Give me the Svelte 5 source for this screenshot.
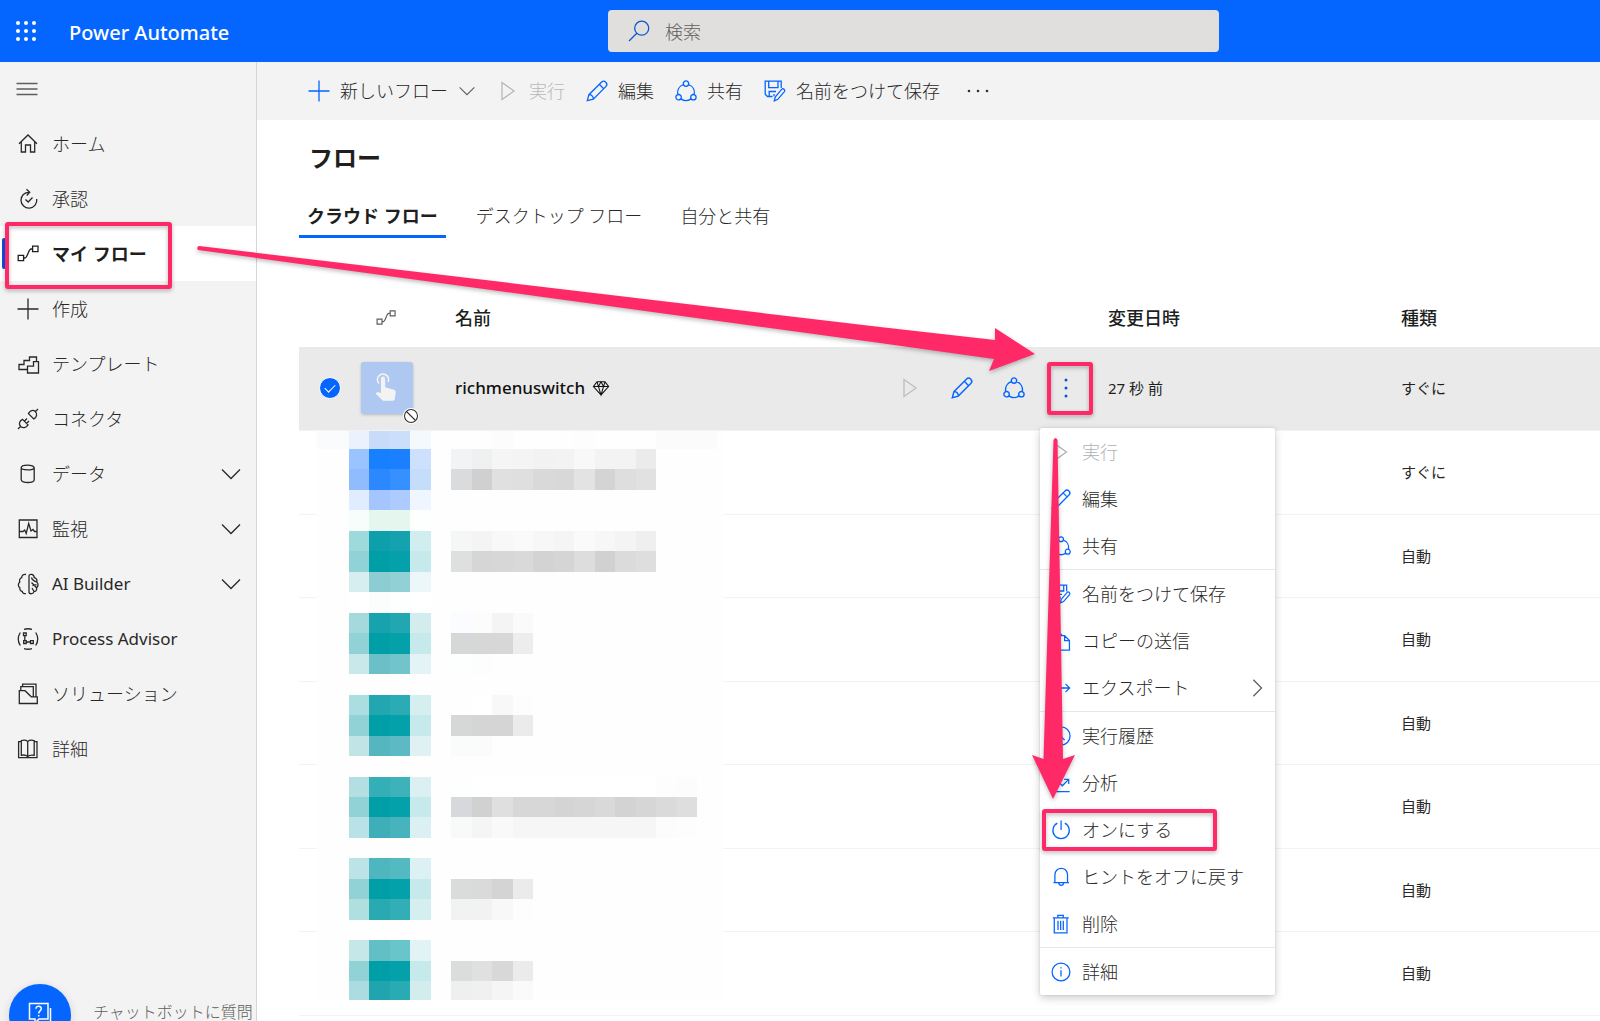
<script>
  const ring = (x, y, r) => `M${x - r} ${y}a${r} ${r} 0 1 0 ${2 * r} 0a${r} ${r} 0 1 0 ${-2 * r} 0`;

  const icons = {
    home: 'M2 10.7L11 2L20 10.7M4.3 8.6V19H8.5V12H13.5V19H17.7V8.6',
    approve: 'M12.2 4.3A7.9 7.9 0 1 0 19.7 11M9.5 1.2L12.7 4.3L9.7 7.5M8.5 11.5L11.2 14L15.5 9.5',
    flow: 'M1.2 12.3H6.6V17.7H1.2ZM15.6 3.2H21V8.6H15.6ZM6.6 15H8C10.5 15 11.5 6 14 6H15.6',
    plus: 'M11 .5V21.5M.5 11H21.5',
    template: 'M10 16.5H2V11.5H7V7.5H12.5V4H19.5V8.5M10.5 20H21.5V8.7H16.5V13.2H10.5Z',
    plug: 'M1 21L3.5 18.5M5.6 11.4L11 16.8C9 20 6 20.5 3.6 18.4C1.5 16 2.2 13 5.6 11.4ZM7.5 13L10 10.5M9.5 15.5L12 13M11.4 5.6L16.8 11C20 9 20.5 6 18.4 3.6C16 1.5 13 2.2 11.4 5.6ZM18.5 3.5L21 1',
    data: 'M4.2 4.8C4.2 1.2 17.2 1.2 17.2 4.8V16.8C17.2 20.4 4.2 20.4 4.2 16.8ZM4.2 4.8C4.2 7.6 17.2 7.6 17.2 4.8',
    monitor: 'M2.3 2H20V19.5H2.3ZM2.5 13.5H6L7.7 12L9.2 15.5L11.7 5.5L14 13L16 11.5L17.5 13.5H20',
    brain: 'M9 1.5C6.5 .8 4.5 2.5 4.7 4.7C2.5 5.5 2.2 7.5 2.8 9C.8 10.5 1 13.5 2.8 14.7C2.5 17 4 18.3 5.2 18.3C5.5 20.5 7.5 21 9 20.5M12 2.5V19.5C12.5 21.3 16.5 21.3 17 18.5C19.5 18.3 20 16.5 19.5 14.7C21.5 13.3 21.5 10.5 19.7 9C20.3 7 19.3 5.3 17.3 4.7C17 .8 12.7 .7 12 2.5M14.5 4.5C15 7 17 8 19.7 9M14.5 9.5L19.5 14.7M19.5 11.7L15.5 12.7M15 15L17 18.5',
    process: 'M7 1.3Q11 .2 15 1.3M3.3 4.5Q-.8 11 3.3 17.5M18.7 4.5Q22.8 11 18.7 17.5M7 20.7Q11 21.8 15 20.7M6.5 5H9.2V7.7H6.5ZM6.7 12.7H9.2V15.5H6.7ZM13.5 12.7H16.3V15.5H13.5ZM7.8 7.7V12.7M9.2 14H13.5',
    solution: 'M2.3 20.5V7.7H8L14.3 13.8H20.3V20.5ZM3.8 7.7V3.7H16.3V13.8M5.6 3.7V1.2H19V13.8M3.8 3.7H5.6',
    book: 'M10.7 3.5V19.5M10.7 3.5C9 2 6.5 2 4.3 2.7V17.3C6.5 16.8 9 17 10.7 18.5C12.5 17 15 16.8 17.2 17.3V2.7C15 2 12.5 2 10.7 3.5M4.3 3.7H1.6V19.6H20V3.7H17.2',
    play: 'M5 2.5L17 11L5 19.5Z',
    edit: 'M1.3 20.7L2.9 14.7L15.4 2.2A3 3 0 0 1 19.8 6.6L7.3 19.1ZM2.9 14.7A4 4 0 0 1 7.3 19.1M13.3 4.3L17.7 8.7',
    share: `${ring(11, 3.6, 2.7)}${ring(3.6, 17.2, 2.7)}${ring(18.4, 17.2, 2.7)}M8.4 4.5C4 6 2 10.3 2.7 14.6M13.6 4.5C18 6 20 10.3 19.3 14.6M6 18.9Q11 22.4 16 18.9`,
    saveas: 'M8 16.5H3.5L1.2 14.2V1.2H17.2V8M4.7 1.2V7.7H14V1.2M8.5 16.5H5.2V11.5H12M10 14V16.3M10.3 20.8L11.2 17L17.8 9.2C19.3 8 21.6 9.8 20.4 11.6L13.8 19.3Z',
    copy: 'M6.5 17H2V1.5H9L12 4.5M6.8 5.2H15L20.3 10.5V21H6.8ZM15 5.2V10.5H20.3',
    exporting: 'M2 4V18M5 11H20.5M16 6.5L20.5 11L16 15.5',
    history: `${ring(11, 11, 10)}M11 5V11.5L15 15.5`,
    chart: 'M1.5 1.5V20.5H20.5M4 16L9 10.5L12.5 14L19.5 7M14.5 7H19.5V12',
    power: 'M7 3.5A9 9 0 1 0 15.2 3.5M11.1 .5V11',
    bell: 'M4.3 17V8.8C4.3 -.8 18.2 -.8 18.2 8.8V17M2.7 17.2H19.8M8.5 17.5C9 21 13.5 21 14 17.5',
    trash: 'M2 4.2H19.5M7.5 4V1.5H13.5V4M3.6 4.5V20.8H17.6V4.5M7.7 7.5V17.5M10.6 7.5V17.5M13.5 7.5V17.5',
    info: `${ring(11, 11, 9.8)}M11 9V16M11 5.8V7.2`,
    down: 'M2 6.5L11 15.5L20 6.5',
    right: 'M7 2L16 11L7 20',
    search: `${ring(13.7, 8.2, 7)}M8.8 13.2L1 21`,
    gem: 'M5.500 2.500H16.500L21.500 9L11 20.500L.5 9ZM.5 9H21.500M5.500 2.500L7.500 9L11 20.500L14.500 9L16.500 2.500M7.500 9L11 2.500L14.500 9',
  };

  const nav = [
    ['home', 'ホーム'], ['approve', '承認'], ['flow', 'マイ フロー'], ['plus', '作成'],
    ['template', 'テンプレート'], ['plug', 'コネクタ'], ['data', 'データ', true],
    ['monitor', '監視', true], ['brain', 'AI Builder', true], ['process', 'Process Advisor'],
    ['solution', 'ソリューション'], ['book', '詳細'],
  ];
  const isLatin = (label) => /^[A-Za-z ]+$/.test(label);

  const menu = [
    [['play', '実行'], ['edit', '編集'], ['share', '共有']],
    [['saveas', '名前をつけて保存'], ['copy', 'コピーの送信'], ['exporting', 'エクスポート']],
    [['history', '実行履歴'], ['chart', '分析'], ['power', 'オンにする'], ['bell', 'ヒントをオフに戻す'], ['trash', '削除']],
    [['info', '詳細']],
  ];

  const kinds = ['すぐに', '自動', '自動', '自動', '自動', '自動', '自動'];

  // Redaction blocks: row index, then icon colours (columns 0-3) and text colours (columns 5+).
  const core = '90d2d6 009ea6 04a1aa c6eaeb';
  const blocks = [
    [-1, 'ebf2fd c8dcf9 cbdffa f4f9fe', 'fefefe fefefe fcfcfc fefefe fefefe fefefe fdfdfd fefefe fefefe fefefe fbfbfb fbfbfb fbfbfb'],
    [0, '9ac4ff 1780ff 1a80ff cde1fe', 'f1f3f4 eef1f0 f5f5f5 f4f4f4 f2f2f2 f3f3f3 f8f8f8 f3f3f3 f3f3f3 ebebeb'],
    [1, '8fbcff 2b88ff 3690ff c4ddfb', 'dadbdd d0d0d0 e0e0e0 dfdfdf d9d9d9 d8d8d8 e3e3e3 d4d4d4 dedede e1e1e1'],
    [2, 'e0ecff a5c5ff adcbff eff6ff', ''],
    [3, 'f7fdfb e5f6ee e5f6ee fcfffe', ''],
    [4, '9ed9db 0d9faa 13a2ae d0eeef', 'f5f7f6 f4f4f4 f8f8f8 fafafa f7f7f7 f5f5f5 fafafa f7f7f7 f4f4f4 efefef'],
    [5, core, 'dee0df d6d6d6 d7d7d7 d9d9d9 d3d3d3 d5d5d5 dddddd d1d1d1 dbdbdb dedede'],
    [6, 'd7eef0 8bcdd2 91d1d6 ebf7f8', ''],
    [7, 'ffffff fafdfc fdfefe ffffff', ''],
    [8, 'a5dadd 17a2ad 20a7b0 d3edef', 'fafcff fcfcfc f4f4f4 fafafa'],
    [9, core, 'd6d8d7 d7d7d7 d7d7d7 ededed'],
    [10, 'c9e8ea 6bc0c8 71c4ca e4f3f5', 'fdfefe fdfdfd'],
    [12, 'aadee0 22a7b0 2bacb4 d5eef0', 'fefefe ffffff f8f8f8 fdfdfd'],
    [13, core, 'd6d8d7 d5d5d5 d5d5d5 ebebeb'],
    [14, 'c1e5e7 56b6c0 5dbac4 e0f1f3', 'fafcfb fbfbfb'],
    [16, 'b3dfe2 34aeb7 3db2ba daf0f3', 'fdfefe ffffff ffffff ffffff ffffff ffffff ffffff ffffff ffffff ffffff fdfdfd fcfcfc'],
    [17, core, 'd7d8db d1d1d1 dfdfdf d7d7d7 d7d7d7 d4d4d4 d6d6d6 d9d9d9 d3d3d3 d6d6d6 dadada dedede'],
    [18, 'b8e2e5 3eafb9 46b3bd dbf0f3', 'f8faf9 f5f5f5 f9f9f9 f6f6f6 f6f6f6 f6f6f6 f6f6f6 f6f6f6 f6f6f6 f6f6f6 fcfcfc fdfdfd'],
    [20, 'bce4e6 4eb6be 53bac1 dcf1f3', ''],
    [21, core, 'dadcdb dadada d4d4d4 ebebeb'],
    [22, 'b0dfe0 29a9b0 32aeb6 d5eef0', 'f1f3f2 f2f2f2 f8f8f8 fdfdfd'],
    [24, 'c5e7e8 62bfc5 68c5ca e2f3f5', ''],
    [25, core, 'dbdddc e0e0e0 d8d8d8 ebebeb'],
    [26, 'abdcdf 20a5ae 29abb4 d3edef', 'eef0ef f0f0f0 f5f5f5 fafafa'],
  ];
  const step = 20.47;
  const edge = (n) => Math.round(n * step);
  const cells = blocks.flatMap(([row, icon, text]) => {
    const place = (list, from) =>
      list.split(' ').filter(Boolean).map((c, i) => ({
        x: edge(from + i), y: edge(row), w: edge(from + i + 1) - edge(from + i),
        h: edge(row + 1) - edge(row), fill: `#${c}`,
      }));
    return [...place(icon, 0), ...place(text, 5)];
  });
</script>

{#snippet icon(name)}
  <svg class="icon" viewBox="0 0 22 22" aria-hidden="true"><path d={icons[name]} /></svg>
{/snippet}

<div class="page">
  <header class="top">
    <div class="brand">
      <button class="plain" aria-label="アプリ起動ツール">
        <svg class="waffle" viewBox="0 0 20 20" aria-hidden="true">
          {#each [2, 10, 18] as x}{#each [2, 10, 18] as y}<circle cx={x} cy={y} r="2" />{/each}{/each}
        </svg>
      </button>
      <span>Power Automate</span>
    </div>
    <label class="search">
      {@render icon('search')}
      <input type="search" placeholder="検索" aria-label="検索" />
    </label>
  </header>

  <div class="body">
    <nav class="side">
      <button class="plain burger" aria-label="メニュー">
        <svg viewBox="0 0 22 14" aria-hidden="true"><path d="M.5 1.5H21.5M.5 7H21.5M.5 12.5H21.5" /></svg>
      </button>
      {#each nav as [glyph, label, expands], i}
        <a href="#{glyph}" class:current={i === 2}>
          {@render icon(glyph)}
          <span class:latin={isLatin(label)}>{label}</span>
          {#if expands}<span class="expand">{@render icon('down')}</span>{/if}
        </a>
      {/each}
    </nav>

    <main>
      <div class="commands">
        <button>{@render icon('plus')}新しいフロー<span class="caret">{@render icon('down')}</span></button>
        <button disabled>{@render icon('play')}実行</button>
        <button>{@render icon('edit')}編集</button>
        <button>{@render icon('share')}共有</button>
        <button>{@render icon('saveas')}名前をつけて保存</button>
        <button class="more" aria-label="その他">
          <svg viewBox="0 0 22 4" aria-hidden="true"><circle cx="2" cy="2" r="1.3" /><circle cx="11" cy="2" r="1.3" /><circle cx="20" cy="2" r="1.3" /></svg>
        </button>
      </div>

      <div class="content">
        <h1>フロー</h1>
        <div class="tabs" role="tablist">
          <button role="tab" aria-selected="true" class="active">クラウド フロー</button>
          <button role="tab" aria-selected="false">デスクトップ フロー</button>
          <button role="tab" aria-selected="false">自分と共有</button>
        </div>

        <div class="list">
          <table>
            <colgroup>
              <col class="c-check" /><col class="c-icon" /><col /><col class="c-actions" /><col class="c-date" /><col class="c-kind" />
            </colgroup>
            <thead>
              <tr>
                <th></th>
                <th><span class="head-icon">{@render icon('flow')}</span></th>
                <th>名前</th>
                <th></th>
                <th>変更日時</th>
                <th>種類</th>
              </tr>
            </thead>
            <tbody>
              <tr class="selected">
                <td><input class="pick" type="checkbox" checked aria-label="richmenuswitch" /></td>
                <td>
                  <div class="tile">
                    <svg viewBox="0 0 24 30" aria-hidden="true">
                      <path class="halo" d="M4.4 10.6A5.2 5.2 0 1 1 13 9.3" />
                      <path d="M6.3 6.3a2 2 0 0 1 4 0V14.2L18.6 16.6Q20.4 17.3 20.2 19.2L19.2 25.6Q18.9 27 17.4 27H9.4Q8.3 27 7.5 26.2L1.2 20.2Q2.6 18.4 5 19.2L6.3 19.6Z" />
                    </svg>
                    <svg class="off" viewBox="0 0 16 16" aria-hidden="true"><circle cx="8" cy="8" r="6.5" /><path d="M3.5 3.5L12.5 12.5" /></svg>
                  </div>
                </td>
                <td><a class="name" href="#flow">richmenuswitch<span class="gem">{@render icon('gem')}</span></a></td>
                <td>
                  <div class="actions">
                    <button disabled aria-label="実行">{@render icon('play')}</button>
                    <button aria-label="編集">{@render icon('edit')}</button>
                    <button aria-label="共有">{@render icon('share')}</button>
                    <button class="dots" aria-label="その他のコマンド" aria-expanded="true">
                      <svg viewBox="0 0 4 20" aria-hidden="true"><circle cx="2" cy="2" r="1.5" /><circle cx="2" cy="10" r="1.5" /><circle cx="2" cy="18" r="1.5" /></svg>
                    </button>
                    <div class="menu" role="menu">
                      {#each menu as group}
                        <div class="group" role="group">
                          {#each group as [glyph, label]}
                            <button role="menuitem" disabled={glyph === 'play'}>
                              {@render icon(glyph)}<span>{label}</span>
                              {#if glyph === 'exporting'}<span class="sub">{@render icon('right')}</span>{/if}
                            </button>
                          {/each}
                        </div>
                      {/each}
                    </div>
                  </div>
                </td>
                <td>27 秒 前</td>
                <td>すぐに</td>
              </tr>
              {#each kinds as kind}
                <tr><td></td><td></td><td></td><td></td><td></td><td>{kind}</td></tr>
              {/each}
            </tbody>
          </table>
          <svg class="redaction" viewBox="-32 -18 406 569" shape-rendering="crispEdges" aria-hidden="true">
            <rect x="-32" y="-18" width="406" height="569" fill="#fefefe" />
            <rect x="-32" y="-18" width="32" height="18" fill="#fafbfd" />
            {#each cells as c}<rect x={c.x} y={c.y} width={c.w} height={c.h} fill={c.fill} />{/each}
          </svg>
        </div>
      </div>
    </main>
  </div>

  <div class="chat">
    <button aria-label="チャットボットに質問">
      <svg viewBox="0 0 24 26" aria-hidden="true">
        <path d="M1.5 1.5H20V17H11L7 21V17H1.5Z" /><path d="M22.5 6V20H19V24L14.5 20H11" />
        <path d="M8 6.8C8 3.2 13.4 3.4 13.3 6.8C13.2 9 10.7 8.8 10.7 11.5M10.7 13V14.6" />
      </svg>
    </button>
    <span>チャットボットに質問</span>
  </div>

  <svg class="notes" aria-hidden="true">
    <rect x="7" y="224" width="163" height="63" rx="1" />
    <rect x="1049" y="364" width="42" height="49" rx="1" />
    <rect x="1044" y="811" width="171" height="38" rx="1" />
    <path d="M199 246L880 327L995 340L995 328L1035 354L989 371L994 359L880 343L198 250Q196 247 199 246Z" />
    <path d="M1053.500 440Q1055.500 436 1057.500 440L1063 759L1075 755L1053 799L1032 755L1043.500 759Z" />
  </svg>
</div>

<style>
  :global(body) { margin: 0; }
  .page {
    position: relative;
    display: flex;
    flex-direction: column;
    height: 100vh;
    overflow: hidden;
    background: #fff;
    color: #292827;
    font: 300 18px/24px "Noto Sans", "Noto Sans CJK JP", sans-serif;
  }
  .page * { box-sizing: border-box; }
  button { border: 0; margin: 0; padding: 0; background: none; color: inherit; font: inherit; white-space: nowrap; }
  a { color: inherit; text-decoration: none; }
  svg { display: block; flex: none; }
  .icon { width: 22px; height: 22px; fill: none; stroke: currentColor; stroke-width: 1.3; overflow: visible; }

  .top { display: flex; align-items: center; flex: none; height: 62px; background: #0466ff; color: #fff; }
  .brand { display: flex; align-items: center; gap: 33px; flex: 0 0 38%; padding-left: 16px; font-size: 20px; font-weight: 500; white-space: nowrap; }
  .brand span { padding-top: 3px; }
  .waffle { width: 20px; height: 20px; fill: #fff; }
  .search { display: flex; align-items: center; gap: 15px; flex: 0 1 611px; height: 42px; padding: 0 20px; border-radius: 4px; background: #e1dfdd; color: #0b56cf; }
  .search input { flex: 1; min-width: 0; border: 0; padding: 2px 0 0; background: none; outline: 0; color: #605e5c; font: inherit; }
  .search input::placeholder { color: #605e5c; opacity: 1; }

  .body { display: flex; flex: 1; min-height: 0; }
  .side { flex: none; width: 257px; border-right: 1px solid #d6d6d6; background: #f3f3f3; }
  .burger { display: flex; align-items: center; height: 54px; padding-left: 16px; }
  .burger svg { width: 22px; height: 14px; fill: none; stroke: #605e5c; stroke-width: 1.5; }
  .side a { position: relative; display: flex; align-items: center; gap: 13px; height: 55px; padding: 0 14px 0 17px; white-space: nowrap; }
  .side a.current { background: #fff; color: #201f1e; font-weight: 600; }
  .side a.current::before { content: ""; position: absolute; left: 2px; top: 12px; bottom: 12px; width: 4px; border-radius: 2px; background: #0f4fe6; }
  .latin { font-size: 17px; font-weight: 400; }
  .expand { margin-left: auto; }

  main { flex: 1; min-width: 0; }
  .commands { display: flex; align-items: center; gap: 21px; height: 58px; padding-left: 51px; background: #f3f3f3; }
  .commands button { display: flex; align-items: center; gap: 10px; }
  .commands .icon { color: #0466ff; }
  .commands button:disabled, .commands button:disabled .icon { color: #b8b8b8; }
  .commands .caret .icon { width: 18px; height: 18px; color: #605e5c; }
  .more { padding: 0 6px; }
  .more svg { width: 22px; height: 4px; fill: #323130; }

  .content { padding: 22px 0 0 42px; }
  h1 { margin: 0 0 23px; padding-left: 10px; color: #201f1e; font-size: 24px; line-height: 32px; font-weight: 600; }
  .tabs { display: flex; gap: 22px; }
  .tabs button { padding: 0 8px; border-bottom: 3px solid transparent; line-height: 38px; }
  .tabs .active { border-color: #0466ff; color: #201f1e; font-weight: 600; }

  .list { position: relative; margin-top: 51px; }
  table { width: 100%; border-collapse: collapse; table-layout: fixed; }
  .c-check { width: 56px; }
  .c-icon { width: 100px; }
  .c-actions { width: 209px; }
  .c-date { width: 293px; }
  .c-kind { width: 199px; }
  th, td { padding: 0; text-align: left; }
  th { height: 58px; color: #201f1e; font-weight: 500; }
  td { height: 83px; border-bottom: 1px solid #f3f3f3; font-size: 15px; font-weight: 400; }
  tr:nth-child(even) td { height: 84px; }
  .selected { background: #eaeaea; color: #201f1e; }
  .head-icon { display: block; padding-left: 21px; }
  .head-icon .icon { width: 20px; height: 20px; color: #605e5c; }
  .pick { appearance: none; width: 22px; height: 22px; margin: 0 0 0 20px; border: 1px solid #fff; border-radius: 50%; background: #0466ff; display: grid; place-items: center; }
  .pick::after { content: ""; width: 9px; height: 5px; margin-top: -3px; border: solid #fff; border-width: 0 0 1px 1px; transform: rotate(-45deg); }
  .tile { position: relative; display: grid; place-items: center; width: 52px; height: 52px; margin-left: 6px; border-radius: 3px; background: #afc8f1; box-shadow: 0 1px 3px #0003; }
  .tile svg { width: 26px; height: 32px; fill: #f3f3f3; }
  .tile .halo { fill: none; stroke: #f3f3f3; stroke-width: 1.6; }
  .tile .off { position: absolute; right: -6px; bottom: -10px; width: 16px; height: 16px; border-radius: 50%; background: #fff; fill: none; stroke: #323130; stroke-width: 1.1; }
  .name { display: flex; align-items: center; gap: 8px; color: #111; font-size: 17px; font-weight: 500; }
  .gem .icon { width: 16px; height: 16px; stroke-width: 1.4; }
  .actions { position: relative; display: flex; align-items: center; gap: 30px; color: #0466ff; }
  .actions button:disabled { color: #c0c0c0; }
  .actions .icon { stroke-width: 1.4; }
  .dots { display: grid; place-items: center; width: 22px; height: 22px; }
  .dots svg { width: 4px; height: 20px; fill: #0b56cf; }

  .menu { position: absolute; z-index: 2; left: 141px; top: 51px; width: 235px; border-radius: 2px; background: #fff; box-shadow: 0 3px 9px #0003, 0 0 2px #0002; color: #292827; font-size: 18px; font-weight: 300; }
  .group + .group { border-top: 1px solid #e6e6e6; }
  .menu button { display: flex; align-items: center; gap: 11px; width: 100%; height: 47px; padding: 0 8px 0 11px; text-align: left; }
  .menu button:disabled, .menu button:disabled .icon { color: #b0b0b0; }
  .menu .icon { width: 20px; height: 20px; color: #0466ff; }
  .menu .sub { margin-left: auto; }
  .menu .sub .icon { color: #605e5c; }

  .redaction { position: absolute; left: 18px; top: 142px; width: 406px; height: 569px; }
  .chat { position: absolute; left: 9px; bottom: -25px; display: flex; align-items: center; gap: 22px; color: #605e5c; font-size: 16px; line-height: 16px; }
  .chat span { padding-bottom: 6px; }
  .chat button { display: grid; place-items: center; width: 62px; height: 62px; border-radius: 50%; background: #0466ff; box-shadow: 0 2px 10px #0002; }
  .chat svg { width: 24px; height: 26px; fill: none; stroke: #fff; stroke-width: 1.5; }
  .notes { position: absolute; z-index: 5; inset: 0; width: 100%; height: 100%; pointer-events: none; filter: drop-shadow(0 2px 2px #0004); }
  .notes rect { fill: none; stroke: #ff2968; stroke-width: 4; }
  .notes path { fill: #ff2968; }
</style>
